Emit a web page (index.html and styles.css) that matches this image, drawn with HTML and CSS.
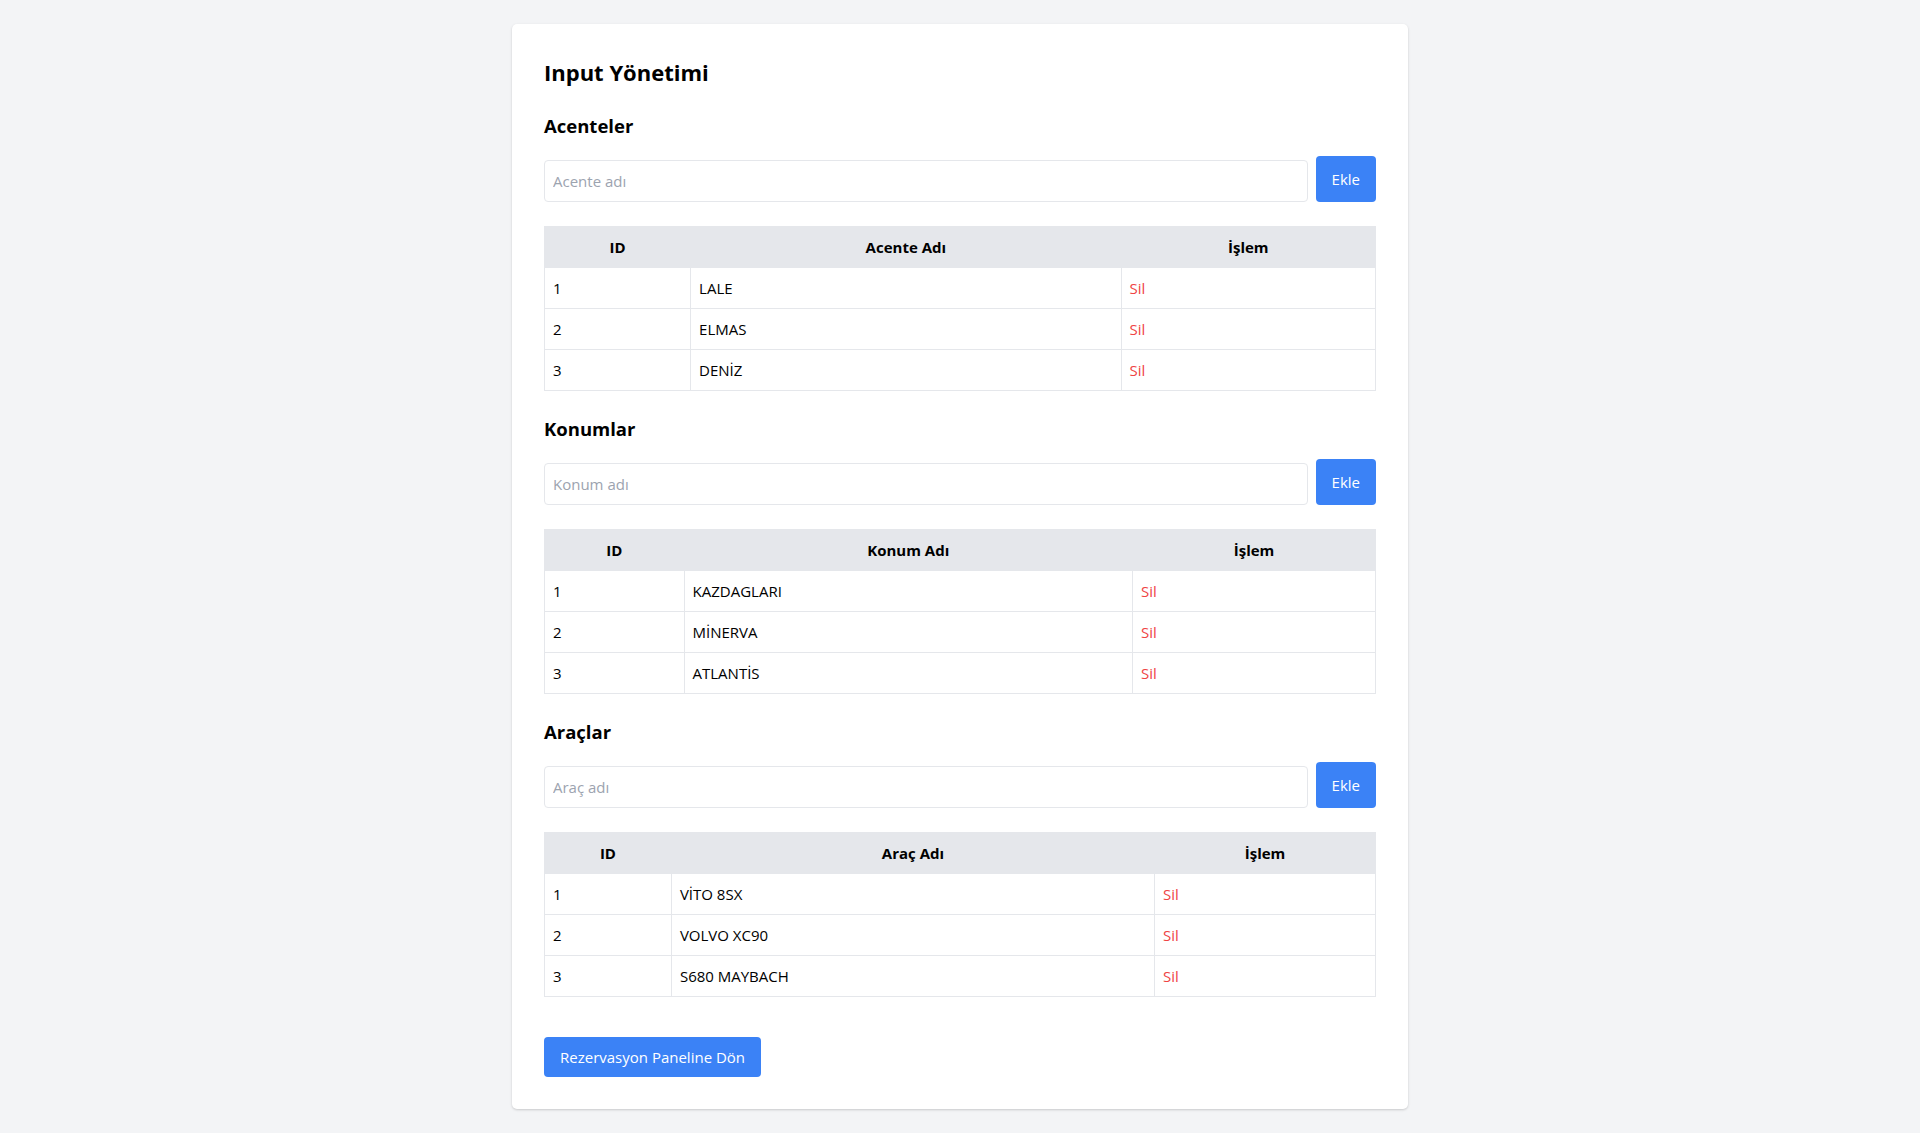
FILE: index.html
```html
<!DOCTYPE html>
<html lang="tr">
<head>
    <meta charset="UTF-8">
    <meta name="viewport" content="width=device-width, initial-scale=1.0">
    <title>Input Yönetimi</title>
    <link rel="stylesheet" href="styles.css">
</head>
<body>
    <div class="panel">
        <h1 class="title">Input Yönetimi</h1>

        <div class="block">
            <h2>Acenteler</h2>
            <div class="add-row">
                <input type="text" placeholder="Acente adı">
                <button class="btn">Ekle</button>
            </div>
            <table>
                <thead>
                    <tr><th>ID</th><th>Acente Adı</th><th>İşlem</th></tr>
                </thead>
                <tbody>
                    <tr><td>1</td><td>LALE</td><td><a class="del" href="#">Sil</a></td></tr>
                    <tr><td>2</td><td>ELMAS</td><td><a class="del" href="#">Sil</a></td></tr>
                    <tr><td>3</td><td>DENİZ</td><td><a class="del" href="#">Sil</a></td></tr>
                </tbody>
            </table>
        </div>

        <div class="block">
            <h2>Konumlar</h2>
            <div class="add-row">
                <input type="text" placeholder="Konum adı">
                <button class="btn">Ekle</button>
            </div>
            <table>
                <thead>
                    <tr><th>ID</th><th>Konum Adı</th><th>İşlem</th></tr>
                </thead>
                <tbody>
                    <tr><td>1</td><td>KAZDAGLARI</td><td><a class="del" href="#">Sil</a></td></tr>
                    <tr><td>2</td><td>MİNERVA</td><td><a class="del" href="#">Sil</a></td></tr>
                    <tr><td>3</td><td>ATLANTİS</td><td><a class="del" href="#">Sil</a></td></tr>
                </tbody>
            </table>
        </div>

        <div class="block">
            <h2>Araçlar</h2>
            <div class="add-row">
                <input type="text" placeholder="Araç adı">
                <button class="btn">Ekle</button>
            </div>
            <table>
                <thead>
                    <tr><th>ID</th><th>Araç Adı</th><th>İşlem</th></tr>
                </thead>
                <tbody>
                    <tr><td>1</td><td>VİTO 8SX</td><td><a class="del" href="#">Sil</a></td></tr>
                    <tr><td>2</td><td>VOLVO XC90</td><td><a class="del" href="#">Sil</a></td></tr>
                    <tr><td>3</td><td>S680 MAYBACH</td><td><a class="del" href="#">Sil</a></td></tr>
                </tbody>
            </table>
        </div>

        <a class="btn back" href="#">Rezervasyon Paneline Dön</a>
    </div>
</body>
</html>
```

FILE: styles.css
```css
*{
    margin: 0;
    padding: 0;
    box-sizing: border-box;
}
body{
    background-color: #f3f4f6;
    padding: 24px;
    font-family: "Open Sans", "Noto Sans", sans-serif;
    font-size: 15px;
    line-height: 24px;
    color: #000;
}
.panel{
    max-width: 896px;
    margin: 0 auto;
    background-color: #fff;
    padding: 32px;
    border-radius: 5px;
    box-shadow: 0 1px 3px rgba(0,0,0,0.12), 0 1px 2px rgba(0,0,0,0.06);
}
.title{
    font-size: 22px;
    line-height: 32px;
    font-weight: 700;
    margin-bottom: 24px;
}
.block h2{
    font-size: 18.5px;
    line-height: 28px;
    font-weight: 700;
    margin-bottom: 16px;
}
.add-row{
    display: flex;
    align-items: flex-end;
    gap: 8px;
    margin-bottom: 24px;
}
.add-row input{
    flex: 1;
    height: 42px;
    padding: 8px;
    border: 1px solid #e5e7eb;
    border-radius: 4px;
    font: inherit;
    color: #000;
    outline: none;
}
.add-row input::placeholder{
    color: #9ca3af;
}
.btn{
    display: inline-block;
    background-color: #3b82f6;
    color: #fff;
    border: none;
    border-radius: 4px;
    padding: 11px 16px;
    font: inherit;
    text-decoration: none;
    cursor: pointer;
}
table{
    width: 100%;
    border-collapse: collapse;
    margin-bottom: 24px;
}
th,td{
    border: 1px solid #e5e7eb;
    padding: 8px;
    text-align: left;
}
th{
    background-color: #e5e7eb;
    font-weight: 700;
    text-align: center;
}
.del{
    color: #ef4444;
    text-decoration: none;
}
.back{
    margin-top: 16px;
    padding: 8px 16px;
}
```
